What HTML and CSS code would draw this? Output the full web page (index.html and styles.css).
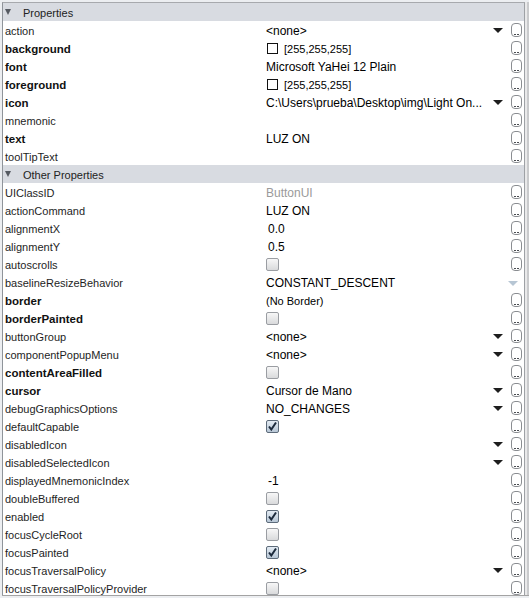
FILE: index.html
```html
<!DOCTYPE html>
<html>
<head>
<meta charset="utf-8">
<link rel="stylesheet" href="styles.css">
</head>
<body>
<div class="frame">
  <div class="sheet">
    <div class="cat"><span class="tri"></span><span class="cat-name">Properties</span></div>
    <div class="row"><div class="name">action</div><div class="value"><span class="v">&lt;none&gt;</span><span class="arrow"></span><span class="btn"></span></div></div>
    <div class="row"><div class="name b">background</div><div class="value"><span class="swatch"></span><span class="v s">[255,255,255]</span><span class="btn"></span></div></div>
    <div class="row"><div class="name b">font</div><div class="value"><span class="v">Microsoft YaHei 12 Plain</span><span class="btn"></span></div></div>
    <div class="row"><div class="name b">foreground</div><div class="value"><span class="swatch"></span><span class="v s">[255,255,255]</span><span class="btn"></span></div></div>
    <div class="row"><div class="name b">icon</div><div class="value"><span class="v">C:\Users\prueba\Desktop\img\Light On...</span><span class="arrow"></span><span class="btn"></span></div></div>
    <div class="row"><div class="name">mnemonic</div><div class="value"><span class="v"></span><span class="btn"></span></div></div>
    <div class="row"><div class="name b">text</div><div class="value"><span class="v">LUZ ON</span><span class="btn"></span></div></div>
    <div class="row"><div class="name">toolTipText</div><div class="value"><span class="v"></span><span class="btn"></span></div></div>

    <div class="cat"><span class="tri"></span><span class="cat-name">Other Properties</span></div>
    <div class="row"><div class="name">UIClassID</div><div class="value"><span class="v gray">ButtonUI</span><span class="btn"></span></div></div>
    <div class="row"><div class="name">actionCommand</div><div class="value"><span class="v">LUZ ON</span><span class="btn"></span></div></div>
    <div class="row"><div class="name">alignmentX</div><div class="value"><span class="v num">0.0</span><span class="btn"></span></div></div>
    <div class="row"><div class="name">alignmentY</div><div class="value"><span class="v num">0.5</span><span class="btn"></span></div></div>
    <div class="row"><div class="name">autoscrolls</div><div class="value"><span class="cb"></span><span class="btn"></span></div></div>
    <div class="row"><div class="name">baselineResizeBehavior</div><div class="value"><span class="v">CONSTANT_DESCENT</span><span class="arrow dis"></span></div></div>
    <div class="row"><div class="name b">border</div><div class="value"><span class="v s">(No Border)</span><span class="btn"></span></div></div>
    <div class="row"><div class="name b">borderPainted</div><div class="value"><span class="cb"></span><span class="btn"></span></div></div>
    <div class="row"><div class="name">buttonGroup</div><div class="value"><span class="v">&lt;none&gt;</span><span class="arrow"></span><span class="btn"></span></div></div>
    <div class="row"><div class="name">componentPopupMenu</div><div class="value"><span class="v">&lt;none&gt;</span><span class="arrow"></span><span class="btn"></span></div></div>
    <div class="row"><div class="name b">contentAreaFilled</div><div class="value"><span class="cb"></span><span class="btn"></span></div></div>
    <div class="row"><div class="name b">cursor</div><div class="value"><span class="v">Cursor de Mano</span><span class="arrow"></span><span class="btn"></span></div></div>
    <div class="row"><div class="name">debugGraphicsOptions</div><div class="value"><span class="v">NO_CHANGES</span><span class="arrow"></span><span class="btn"></span></div></div>
    <div class="row"><div class="name">defaultCapable</div><div class="value"><span class="cb on"><svg width="11" height="11" viewBox="0 0 11 11"><path d="M2 5.5 L4.3 8.6 L9 1.5" fill="none" stroke="#1c2a3c" stroke-width="2"/></svg></span><span class="btn"></span></div></div>
    <div class="row"><div class="name">disabledIcon</div><div class="value"><span class="v"></span><span class="arrow"></span><span class="btn"></span></div></div>
    <div class="row"><div class="name">disabledSelectedIcon</div><div class="value"><span class="v"></span><span class="arrow"></span><span class="btn"></span></div></div>
    <div class="row"><div class="name">displayedMnemonicIndex</div><div class="value"><span class="v num">-1</span><span class="btn"></span></div></div>
    <div class="row"><div class="name">doubleBuffered</div><div class="value"><span class="cb"></span><span class="btn"></span></div></div>
    <div class="row"><div class="name">enabled</div><div class="value"><span class="cb on"><svg width="11" height="11" viewBox="0 0 11 11"><path d="M2 5.5 L4.3 8.6 L9 1.5" fill="none" stroke="#1c2a3c" stroke-width="2"/></svg></span><span class="btn"></span></div></div>
    <div class="row"><div class="name">focusCycleRoot</div><div class="value"><span class="cb"></span><span class="btn"></span></div></div>
    <div class="row"><div class="name">focusPainted</div><div class="value"><span class="cb on"><svg width="11" height="11" viewBox="0 0 11 11"><path d="M2 5.5 L4.3 8.6 L9 1.5" fill="none" stroke="#1c2a3c" stroke-width="2"/></svg></span><span class="btn"></span></div></div>
    <div class="row"><div class="name">focusTraversalPolicy</div><div class="value"><span class="v">&lt;none&gt;</span><span class="arrow"></span><span class="btn"></span></div></div>
    <div class="row"><div class="name">focusTraversalPolicyProvider</div><div class="value"><span class="cb"></span><span class="btn"></span></div></div>
  </div>
  <div class="scroll"><div class="thumb"></div></div>
</div>
</body>
</html>
```
FILE: styles.css
```css
html, body {
  margin: 0;
  padding: 0;
}
body {
  background: #eceef1;
  font-family: "Liberation Sans", Arial, sans-serif;
  width: 529px;
  height: 598px;
  overflow: hidden;
}
.frame {
  display: flex;
  margin: 2px 0 0 2px;
  height: 593px;
  border-bottom: 1px solid #a3a3a3;
}
.sheet {
  flex: none;
  width: 521px;
  height: 592px;
  overflow: hidden;
  background: #ffffff;
  border-left: 1px solid #8f949a;
  border-top: 1px solid #a7a9ad;
  border-right: 1px solid #9ea1a5;
}
.scroll {
  flex: 1;
  background: #e9e9ea;
  display: flex;
  justify-content: flex-end;
}
.thumb {
  width: 2px;
  background: #c9cacc;
}
.cat {
  height: 18px;
  display: flex;
  align-items: center;
  background: #d8dbe1;
  font-size: 11px;
  color: #222;
}
.tri {
  width: 0;
  height: 0;
  border-left: 3.5px solid transparent;
  border-right: 3.5px solid transparent;
  border-top: 6px solid #555a61;
  margin-left: 2px;
  margin-right: 12px;
}
.cat-name {
  padding-top: 2px;
}
.row {
  display: flex;
  height: 18px;
  align-items: center;
}
.name {
  flex: none;
  width: 261px;
  padding-left: 2px;
  padding-top: 2px;
  font-size: 11px;
  color: #1e1e1e;
  white-space: nowrap;
  overflow: hidden;
}
.name.b {
  font-weight: bold;
  font-size: 11.5px;
  color: #111;
}
.value {
  flex: 1;
  display: flex;
  align-items: center;
  height: 18px;
  min-width: 0;
}
.v {
  flex: 1;
  padding-top: 2px;
  font-size: 12px;
  color: #000;
  white-space: nowrap;
  overflow: hidden;
}
.v.s {
  font-size: 11px;
}
.v.num {
  padding-left: 2px;
}
.v.gray {
  color: #9a9a9a;
}
.swatch {
  flex: none;
  width: 9px;
  height: 9px;
  border: 1px solid #111;
  background: #fff;
  margin-left: 1px;
  margin-right: 6px;
}
.arrow {
  flex: none;
  width: 0;
  height: 0;
  border-left: 5px solid transparent;
  border-right: 5px solid transparent;
  border-top: 5px solid #1e1e1e;
  margin-right: 8px;
}
.arrow.dis {
  border-top-color: #b7c6d4;
  margin-left: auto;
  margin-right: 6px;
  margin-top: 2px;
}
.btn {
  flex: none;
  position: relative;
  width: 9px;
  height: 12px;
  border: 1px solid #8a8d91;
  border-radius: 4px;
  background: #fff;
  margin-left: auto;
  margin-right: 2px;
  margin-top: 0;
}
.arrow + .btn {
  margin-left: 0;
}
.btn::after {
  content: "";
  position: absolute;
  left: 2px;
  bottom: 1px;
  width: 2px;
  height: 1px;
  background: #4a4d52;
  box-shadow: 3px 0 0 #4a4d52;
}
.cb {
  flex: none;
  width: 11px;
  height: 11px;
  border: 1px solid #9a9da2;
  border-radius: 2px;
  background: linear-gradient(#f7f7f7, #d9dadc);
  margin-right: 6px;
  display: flex;
  align-items: center;
  justify-content: center;
}
.cb.on {
  border-color: #5d6b7a;
  background: linear-gradient(#e3ebf3, #b8c7d6);
}
.cb svg {
  display: block;
}
```
